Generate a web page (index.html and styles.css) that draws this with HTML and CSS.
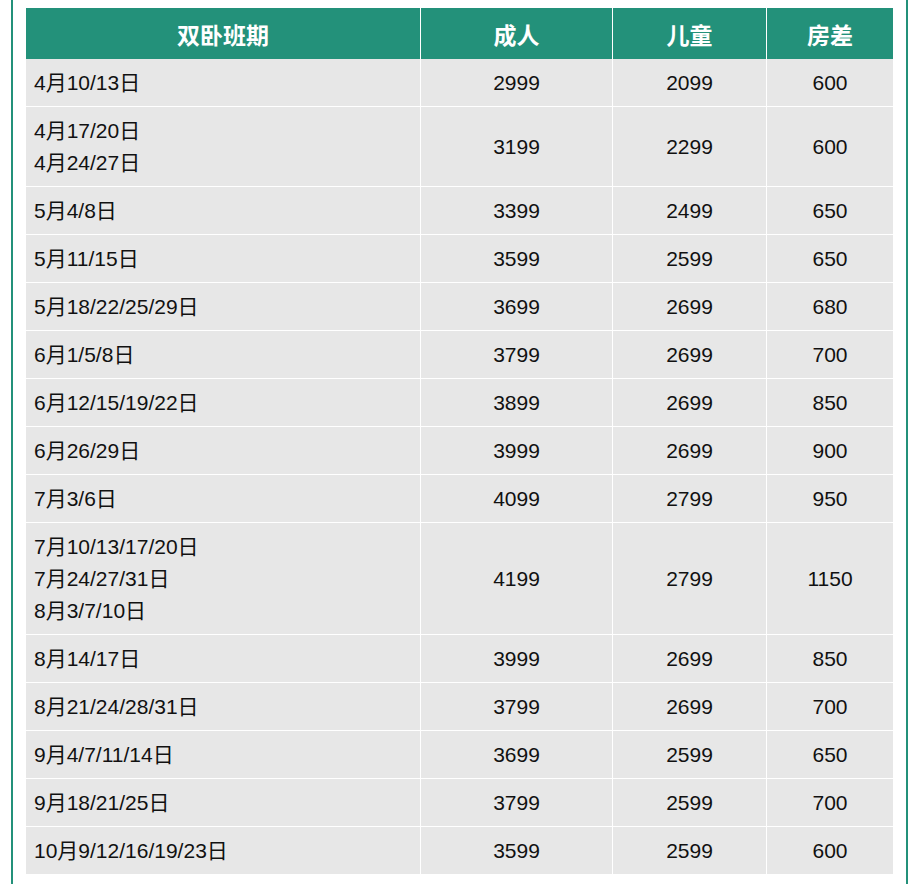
FILE: index.html
```html
<!DOCTYPE html>
<html lang="zh-CN">
<head>
<meta charset="utf-8">
<title>双卧班期</title>
<link rel="stylesheet" href="styles.css">
</head>
<body>
<div class="frame">
<table class="price">
<colgroup>
<col class="c1"><col class="c2"><col class="c3"><col class="c4">
</colgroup>
<thead>
<tr><th>双卧班期</th><th>成人</th><th>儿童</th><th>房差</th></tr>
</thead>
<tbody>
<tr><td class="date">4月10/13日</td><td>2999</td><td>2099</td><td>600</td></tr>
<tr><td class="date">4月17/20日<br>4月24/27日</td><td>3199</td><td>2299</td><td>600</td></tr>
<tr><td class="date">5月4/8日</td><td>3399</td><td>2499</td><td>650</td></tr>
<tr><td class="date">5月11/15日</td><td>3599</td><td>2599</td><td>650</td></tr>
<tr><td class="date">5月18/22/25/29日</td><td>3699</td><td>2699</td><td>680</td></tr>
<tr><td class="date">6月1/5/8日</td><td>3799</td><td>2699</td><td>700</td></tr>
<tr><td class="date">6月12/15/19/22日</td><td>3899</td><td>2699</td><td>850</td></tr>
<tr><td class="date">6月26/29日</td><td>3999</td><td>2699</td><td>900</td></tr>
<tr><td class="date">7月3/6日</td><td>4099</td><td>2799</td><td>950</td></tr>
<tr><td class="date">7月10/13/17/20日<br>7月24/27/31日<br>8月3/7/10日</td><td>4199</td><td>2799</td><td>1150</td></tr>
<tr><td class="date">8月14/17日</td><td>3999</td><td>2699</td><td>850</td></tr>
<tr><td class="date">8月21/24/28/31日</td><td>3799</td><td>2699</td><td>700</td></tr>
<tr><td class="date">9月4/7/11/14日</td><td>3699</td><td>2599</td><td>650</td></tr>
<tr><td class="date">9月18/21/25日</td><td>3799</td><td>2599</td><td>700</td></tr>
<tr><td class="date">10月9/12/16/19/23日</td><td>3599</td><td>2599</td><td>600</td></tr>
</tbody>
</table>
</div>
</body>
</html>
```

FILE: styles.css
```css
html, body {
  margin: 0;
  padding: 0;
  background: #ffffff;
}

.frame {
  box-sizing: border-box;
  width: 897px;
  min-height: 884px;
  margin-left: 11px;
  padding: 8px 13px 0;
  border-left: 2px solid #23917a;
  border-right: 2px solid #23917a;
}

.price {
  width: 867px;
  table-layout: fixed;
  border-collapse: separate;
  border-spacing: 0;
  font-family: "Liberation Sans", Arial, "Noto Sans CJK SC", sans-serif;
  color: #111111;
}

.c1 { width: 395px; }
.c2 { width: 192px; }
.c3 { width: 154px; }
.c4 { width: 126px; }

.price th {
  height: 51px;
  padding: 0;
  background: #23917a;
  color: #ffffff;
  font-family: "Noto Sans CJK SC", "Liberation Sans", sans-serif;
  font-size: 23px;
  line-height: 30px;
  font-weight: 700;
  text-align: center;
  vertical-align: middle;
  border-right: 1px solid #ffffff;
  box-sizing: border-box;
}

.price td {
  box-sizing: border-box;
  padding: 8px 0 7px;
  background: #e7e7e7;
  font-size: 21px;
  line-height: 32px;
  text-align: center;
  vertical-align: middle;
  border-right: 1px solid #ffffff;
  border-bottom: 1px solid #ffffff;
}

.price th:last-child,
.price td:last-child {
  border-right: 0;
}

.price td.date {
  text-align: left;
  padding-left: 8px;
}
```
